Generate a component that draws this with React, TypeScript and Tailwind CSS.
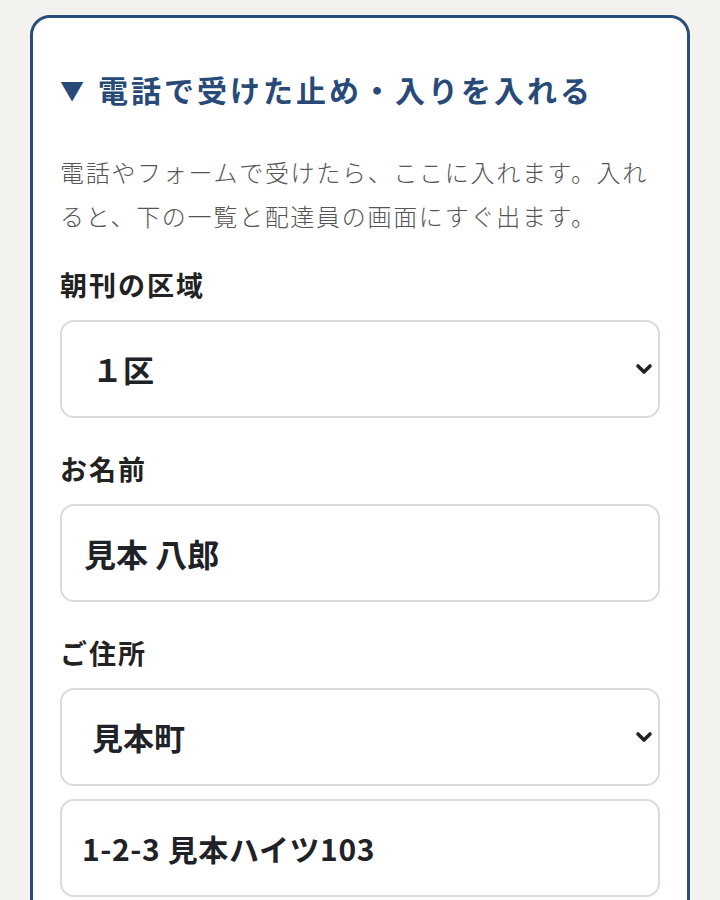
import React from "react";

const font = { fontFamily: '"Noto Sans CJK JP", "Noto Sans", sans-serif' };

function Chevron() {
  return (
    <svg
      className="pointer-events-none absolute right-[7px] top-1/2 -translate-y-1/2"
      width="18"
      height="14"
      viewBox="0 0 18 14"
      fill="none"
    >
      <path d="M3 4 L9 10 L15 4" stroke="#1f2328" strokeWidth="3.6" strokeLinecap="round" strokeLinejoin="round" />
    </svg>
  );
}

export default function App() {
  return (
    <div className="min-h-[900px] w-full bg-[#f3f2ef] px-[30px] pt-[15px]" style={font}>
      <div className="rounded-[20px] border-[3px] border-[#2a4d7c] bg-white px-[27px] pt-[49px] pb-[40px]">
        <h2 className="flex items-center text-[30px] leading-[45px] font-bold tracking-[3px] text-[#274a78]">
          <span className="mr-[14px] text-[24px] tracking-normal">▼</span>
          <span>電話で受けた止め・入りを入れる</span>
        </h2>
        <p className="mt-[38px] text-[24px] leading-[44px] tracking-[1.7px] font-light text-[#555555]">
          電話やフォームで受けたら、ここに入れます。入れると、下の一覧と配達員の画面にすぐ出ます。
        </p>

        <label className="mt-[27px] block text-[27px] leading-[40px] font-bold tracking-[2px] text-[#222222]">
          朝刊の区域
        </label>
        <div className="relative mt-[15px]">
          <select
            defaultValue="1"
            className="h-[98px] w-full appearance-none rounded-[14px] border-2 border-[#dcdbd7] bg-white pl-[30px] text-[31px] font-bold text-[#1f2328] outline-none"
            style={font}
          >
            <option value="1">１区</option>
            <option value="2">２区</option>
          </select>
          <Chevron />
        </div>

        <label className="mt-[31px] block text-[27px] leading-[40px] font-bold tracking-[2px] text-[#222222]">
          お名前
        </label>
        <input
          defaultValue="見本 八郎"
          className="mt-[15px] block h-[98px] w-full rounded-[14px] border-2 border-[#dcdbd7] bg-white pl-[22px] text-[32px] font-bold text-[#1f2328] outline-none"
          style={font}
        />

        <label className="mt-[31px] block text-[27px] leading-[40px] font-bold tracking-[2px] text-[#222222]">
          ご住所
        </label>
        <div className="relative mt-[15px]">
          <select
            defaultValue="a"
            className="h-[98px] w-full appearance-none rounded-[14px] border-2 border-[#dcdbd7] bg-white pl-[30px] text-[31px] font-bold text-[#1f2328] outline-none"
            style={font}
          >
            <option value="a">見本町</option>
          </select>
          <Chevron />
        </div>
        <input
          defaultValue="1-2-3 見本ハイツ103"
          className="mt-[13px] block h-[98px] w-full rounded-[14px] border-2 border-[#dcdbd7] bg-white pl-[20px] text-[30px] font-semibold tracking-[0.6px] text-[#1f2328] outline-none"
          style={font}
        />
      </div>
    </div>
  );
}
